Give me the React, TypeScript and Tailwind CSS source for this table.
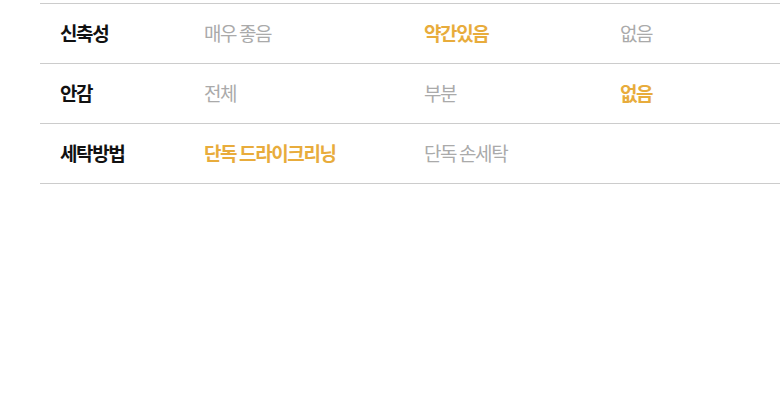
const rows = [
  { label: '신축성', options: ['매우 좋음', '약간있음', '없음'], active: 1 },
  { label: '안감', options: ['전체', '부분', '없음'], active: 2 },
  { label: '세탁방법', options: ['단독 드라이크리닝', '단독 손세탁', ''], active: 0 },
];

export default function App() {
  return (
    <div className="w-[780px] h-[420px] bg-white pt-[3px] pl-10" style={{ fontFamily: '"Noto Sans CJK KR", "Noto Sans", sans-serif' }}>
      <div className="border-t border-[#cccccc]">
        {rows.map((row) => (
          <div key={row.label} className="flex items-center h-[60px] pb-[3px] border-b border-[#cccccc] text-[19px] leading-none tracking-[-1.4px]">
            <div className="w-[164px] pl-5 font-bold text-[#111111]">{row.label}</div>
            {row.options.map((opt, i) => (
              <div
                key={i}
                className={`${i === 0 ? 'w-[220px]' : i === 1 ? 'w-[196px]' : 'flex-1'} ${
                  i === row.active ? 'font-bold text-[#e8ac3c]' : 'text-[#aaaaaa]'
                }`}
              >
                {opt}
              </div>
            ))}
          </div>
        ))}
      </div>
    </div>
  );
}
